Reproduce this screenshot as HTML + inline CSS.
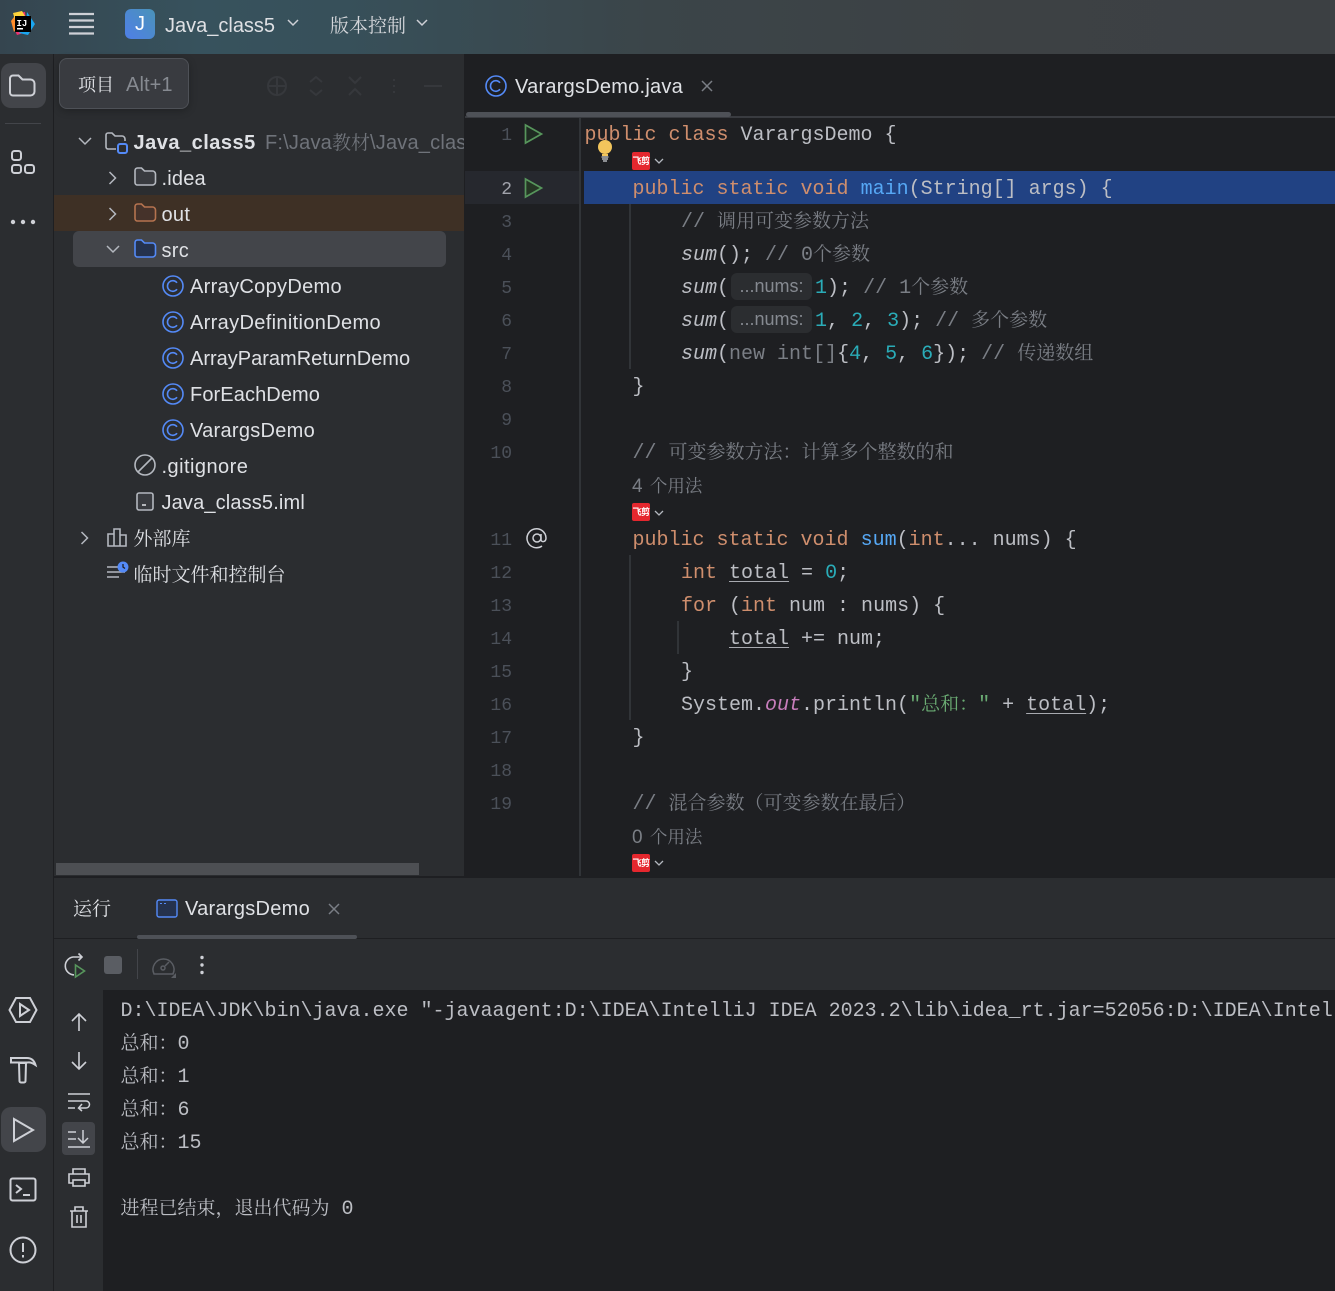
<!DOCTYPE html>
<html lang="zh"><head><meta charset="utf-8"><title>VarargsDemo</title>
<style>
*{box-sizing:border-box}
html,body{margin:0;padding:0;background:#1e1f22}
#r{position:relative;width:1335px;height:1291px;overflow:hidden;background:#1e1f22;font-family:"Liberation Sans","Noto Sans CJK SC",sans-serif}
.a{position:absolute}
.u{position:absolute;white-space:pre;font-size:20px;line-height:36px;height:36px;color:#dfe1e5;letter-spacing:.3px;margin-top:1px}
.s{font-family:"Liberation Serif","Noto Serif CJK SC",serif;letter-spacing:0;font-size:19px;line-height:0}
.c{position:absolute;white-space:pre;font-family:"Liberation Mono",monospace;font-size:20px;line-height:33px;height:33px;color:#bcbec4;margin-top:1px}
.n{position:absolute;width:24px;text-align:right;left:488px;font-family:"Liberation Mono",monospace;font-size:18px;line-height:33px;height:33px;color:#4b5059;margin-top:2px}
.k{color:#cf8e6d}.m{color:#56a8f5}.d{color:#2aacb8}.g{color:#7a7e85}.e{font-style:italic}.f{font-style:italic;color:#c77dbb}.q{color:#6aab73}
.z{font-family:"Noto Serif CJK SC",serif;font-size:19px;font-style:normal;line-height:0}
u{text-decoration-color:#a8aab0;text-decoration-thickness:1px;text-underline-offset:3px}
.h{display:inline-block;vertical-align:top;margin:1px 3px 0 2px;width:81px;height:27px;line-height:27px;background:#2b2d30;border-radius:6px;font-family:"Liberation Sans",sans-serif;font-size:18px;color:#868a91;text-align:center}
.v{position:absolute;width:2px;background:#313438}
.fj{position:absolute;width:18px;height:18px;border-radius:2px;background:#e5272e;color:#fff;font:700 9px/18px "Noto Sans CJK SC",sans-serif;text-align:center;letter-spacing:-.5px;overflow:hidden;white-space:nowrap}
svg{position:absolute;overflow:visible;fill:none}
</style></head><body><div id="r">

<!-- title bar -->
<div class="a" style="left:0;top:0;width:1335px;height:54px;background:linear-gradient(90deg,#35454f 0,#37525d 200px,#37505a 340px,#3b4549 650px,#3d4144 1000px,#3c4043 1335px)"></div>
<svg style="left:0;top:0" width="110" height="54">
<polygon points="15,13 25,12 27,32 17,35 13,26" fill="#f0326e"/><polygon points="11,21 17,13 22,22 14,32" fill="#ff8c2a"/><polygon points="13,13 22,11 25,16 15,20" fill="#ffd43a"/><polygon points="27,12 35,24 28,35 19,33 26,24" fill="#1aa6f0"/>
<rect x="15" y="16" width="16" height="16" fill="#000"/>
<text x="16.5" y="26" font-family="Liberation Mono" font-weight="700" font-size="9" fill="#fff">IJ</text>
<rect x="17" y="28" width="6" height="1.500" fill="#fff"/>
<g stroke="#ced0d6" stroke-width="2.200"><path d="M69 14h25M69 20.500h25M69 27h25M69 33.500h25"/></g>
</svg>
<div class="a" style="left:125px;top:9px;width:30px;height:30px;border-radius:6px;background:linear-gradient(45deg,#4f7fe8,#4a93b8);color:#fff;font-size:20px;line-height:30px;text-align:center">J</div>
<div class="u" style="left:165px;top:7px;letter-spacing:0">Java_class5</div>
<svg style="left:287px;top:19px" width="12" height="8"><path d="M1 1l5 5 5-5" stroke="#ced0d6" stroke-width="1.500"/></svg>
<div class="u" style="left:330px;top:7px;color:#d5d7db"><span class="s">版本控制</span></div>
<svg style="left:416px;top:19px" width="12" height="8"><path d="M1 1l5 5 5-5" stroke="#ced0d6" stroke-width="1.500"/></svg>

<!-- left strip -->
<div class="a" style="left:0;top:54px;width:53px;height:1237px;background:#2b2d30"></div>
<div class="a" style="left:53px;top:54px;width:1px;height:1237px;background:#1e1f22"></div>
<div class="a" style="left:1px;top:63px;width:45px;height:45px;border-radius:10px;background:#43454a"></div>
<svg style="left:9px;top:74px" width="28" height="24"><path d="M1 4.500a3 3 0 0 1 3-3h5.500l4 4h8a4 4 0 0 1 4 4v8a4 4 0 0 1-4 4H4a3 3 0 0 1-3-3z" stroke="#ced0d6" stroke-width="2"/></svg>
<div class="a" style="left:5px;top:123px;width:36px;height:1px;background:#43454a"></div>
<svg style="left:10px;top:149px" width="26" height="26" stroke="#ced0d6" stroke-width="2"><rect x="2" y="2" width="9" height="9" rx="2.500"/><rect x="2" y="16" width="9" height="8" rx="2.500"/><rect x="15" y="16" width="9" height="8" rx="2.500"/></svg>
<svg style="left:10px;top:217px" width="26" height="10"><circle cx="3" cy="5" r="2.200" fill="#ced0d6"/><circle cx="13" cy="5" r="2.200" fill="#ced0d6"/><circle cx="23" cy="5" r="2.200" fill="#ced0d6"/></svg>

<svg style="left:8px;top:995px" width="30" height="30" stroke="#ced0d6" stroke-width="2"><path d="M8 3h14l6.500 12L22 27H8L1.500 15z"/><path d="M12 9l9 6-9 6z"/></svg>
<svg style="left:9px;top:1055px" width="28" height="30" stroke="#ced0d6" stroke-width="2"><path d="M2 3h16c4 0 7 2 8.500 7-3-2-5-3-8-2.500H2zM10 8h7l-.5 18a1.500 1.500 0 0 1-1.500 1.500h-3a1.500 1.500 0 0 1-1.500-1.500z"/></svg>
<div class="a" style="left:1px;top:1107px;width:45px;height:45px;border-radius:10px;background:#43454a"></div>
<svg style="left:12px;top:1117px" width="24" height="26"><path d="M2 2l19 11L2 24z" stroke="#ced0d6" stroke-width="2"/></svg>
<svg style="left:9px;top:1177px" width="28" height="26" stroke="#ced0d6" stroke-width="2"><rect x="1.500" y="1.500" width="25" height="22" rx="2"/><path d="M7 8l5 4-5 4M14 18h7"/></svg>
<svg style="left:9px;top:1236px" width="28" height="28" stroke="#ced0d6" stroke-width="2"><circle cx="14" cy="14" r="12.500"/><path d="M14 7v9M14 19v2.500"/></svg>

<!-- project panel -->
<div class="a" style="left:54px;top:54px;width:410px;height:823px;background:#2b2d30"></div>
<div class="a" style="left:54px;top:195px;width:410px;height:36px;background:#3e3025"></div>
<div class="a" style="left:73px;top:231px;width:373px;height:36px;border-radius:6px;background:#43454a"></div>
<div class="a" style="left:56px;top:863px;width:363px;height:12px;background:#4d4f53"></div>

<svg style="left:268px;top:76px" width="170" height="20" stroke="#36383c" stroke-width="2"><circle cx="9" cy="10" r="9"/><path d="M9 0v20M0 10h18M42 6l6-5 6 5M42 14l6 5 6-5M81 1l6 6 6-6M81 19l6-6 6 6M126 3v2M126 9v2M126 15v2M156 10h18"/></svg>

<div class="a" style="left:59px;top:58px;width:130px;height:51px;background:#393b40;border:1px solid #4e5157;border-radius:8px;box-shadow:0 2px 8px rgba(0,0,0,.25)"></div>
<div class="u" style="left:78px;top:66px;color:#dfe1e5"><span class="s" style="font-size:18px">项目</span></div>
<div class="u" style="left:126px;top:66px;color:#868a91;letter-spacing:.1px">Alt+1</div>

<svg style="left:78px;top:137px" width="14" height="9"><path d="M1 1l6 6 6-6" stroke="#b4b8bf" stroke-width="1.500"/></svg>
<svg style="left:105px;top:131px" width="24" height="24"><path d="M1 16V4a2 2 0 0 1 2-2h4l3 3h7a3 3 0 0 1 3 3v2M11 18H3a2 2 0 0 1-2-2" stroke="#b4b8bf" stroke-width="1.600"/><rect x="13" y="13" width="9" height="9" rx="2" stroke="#548af7" stroke-width="2"/></svg>
<div class="u" style="left:133.500px;top:124px;font-weight:700;letter-spacing:.5px">Java_class5</div>
<div class="a" style="left:265px;top:124px;width:199px;height:38px;overflow:hidden"><div class="u" style="left:0;top:0;color:#6f737a;letter-spacing:.2px">F:\Java<span class="s">教材</span>\Java_class5</div></div>

<svg style="left:108px;top:171px" width="9" height="14"><path d="M1.500 1l6 6-6 6" stroke="#b4b8bf" stroke-width="1.500"/></svg>
<svg style="left:134px;top:167px" width="23" height="20"><path d="M1 3.500a2.500 2.500 0 0 1 2.500-2.500h4l3 3h8a3 3 0 0 1 3 3v8a3 3 0 0 1-3 3h-15a2.500 2.500 0 0 1-2.500-2.500z" stroke="#b4b8bf" stroke-width="1.600" fill="#393b40"/></svg>
<div class="u" style="left:161.500px;top:160px;letter-spacing:.2px">.idea</div>

<svg style="left:108px;top:207px" width="9" height="14"><path d="M1.500 1l6 6-6 6" stroke="#b4b8bf" stroke-width="1.500"/></svg>
<svg style="left:134px;top:203px" width="23" height="20"><path d="M1 3.500a2.500 2.500 0 0 1 2.500-2.500h4l3 3h8a3 3 0 0 1 3 3v8a3 3 0 0 1-3 3h-15a2.500 2.500 0 0 1-2.500-2.500z" stroke="#b5734f" stroke-width="1.600" fill="#45322a"/></svg>
<div class="u" style="left:161.500px;top:196px">out</div>

<svg style="left:106px;top:245px" width="14" height="9"><path d="M1 1l6 6 6-6" stroke="#b4b8bf" stroke-width="1.500"/></svg>
<svg style="left:134px;top:239px" width="23" height="20"><path d="M1 3.500a2.500 2.500 0 0 1 2.500-2.500h4l3 3h8a3 3 0 0 1 3 3v8a3 3 0 0 1-3 3h-15a2.500 2.500 0 0 1-2.500-2.500z" stroke="#548af7" stroke-width="1.600" fill="#25324d"/></svg>
<div class="u" style="left:161.500px;top:232px">src</div>

<svg style="left:162px;top:275px" width="22" height="22" stroke="#548af7" stroke-width="1.600"><circle cx="11" cy="11" r="10"/><path d="M15 7.800a5.300 5.300 0 1 0 0 6.400"/></svg>
<div class="u" style="left:190px;top:268px;letter-spacing:.32px">ArrayCopyDemo</div>
<svg style="left:162px;top:311px" width="22" height="22" stroke="#548af7" stroke-width="1.600"><circle cx="11" cy="11" r="10"/><path d="M15 7.800a5.300 5.300 0 1 0 0 6.400"/></svg>
<div class="u" style="left:190px;top:304px;letter-spacing:.34px">ArrayDefinitionDemo</div>
<svg style="left:162px;top:347px" width="22" height="22" stroke="#548af7" stroke-width="1.600"><circle cx="11" cy="11" r="10"/><path d="M15 7.800a5.300 5.300 0 1 0 0 6.400"/></svg>
<div class="u" style="left:190px;top:340px;letter-spacing:0">ArrayParamReturnDemo</div>
<svg style="left:162px;top:383px" width="22" height="22" stroke="#548af7" stroke-width="1.600"><circle cx="11" cy="11" r="10"/><path d="M15 7.800a5.300 5.300 0 1 0 0 6.400"/></svg>
<div class="u" style="left:190px;top:376px;letter-spacing:.1px">ForEachDemo</div>
<svg style="left:162px;top:419px" width="22" height="22" stroke="#548af7" stroke-width="1.600"><circle cx="11" cy="11" r="10"/><path d="M15 7.800a5.300 5.300 0 1 0 0 6.400"/></svg>
<div class="u" style="left:190px;top:412px;letter-spacing:.28px">VarargsDemo</div>

<svg style="left:134px;top:454px" width="22" height="22" stroke="#b4b8bf" stroke-width="1.600"><circle cx="11" cy="11" r="10"/><path d="M4 18L18 4"/></svg>
<div class="u" style="left:161.500px;top:448px;letter-spacing:.45px">.gitignore</div>
<svg style="left:136px;top:492px" width="18" height="20"><rect x="1" y="1" width="16" height="17" rx="2" stroke="#b4b8bf" stroke-width="1.600" fill="#393b40"/><path d="M6 13h4" stroke="#dfe1e5" stroke-width="1.500"/></svg>
<div class="u" style="left:161.500px;top:484px;letter-spacing:.15px">Java_class5.iml</div>

<svg style="left:80px;top:531px" width="9" height="14"><path d="M1.500 1l6 6-6 6" stroke="#b4b8bf" stroke-width="1.500"/></svg>
<svg style="left:107px;top:528px" width="21" height="19" stroke="#b4b8bf" stroke-width="1.600"><path d="M1 6h6v12H1zM7 1h6v17H7zM13 7h6v11h-6z"/></svg>
<div class="u" style="left:133.500px;top:520px"><span class="s">外部库</span></div>
<svg style="left:107px;top:561px" width="22" height="22"><path d="M0 6h12M0 11h18M0 16h12" stroke="#b4b8bf" stroke-width="1.500"/><circle cx="16" cy="6" r="5.500" fill="#548af7"/><path d="M16 3v3l2 1.500" stroke="#1e1f22" stroke-width="1.300"/></svg>
<div class="u" style="left:133.500px;top:556px"><span class="s">临时文件和控制台</span></div>

<!-- editor -->
<div class="a" style="left:464px;top:54px;width:1px;height:823px;background:#1e1f22"></div>
<svg style="left:485px;top:75px" width="22" height="22" stroke="#548af7" stroke-width="1.600"><circle cx="11" cy="11" r="10"/><path d="M15 7.800a5.300 5.300 0 1 0 0 6.400"/></svg>
<div class="u" style="left:515px;top:68px;letter-spacing:.24px">VarargsDemo.java</div>
<svg style="left:701px;top:80px" width="12" height="12"><path d="M1 1l10 10M11 1L1 11" stroke="#7a7e85" stroke-width="1.500"/></svg>
<div class="a" style="left:465px;top:116px;width:870px;height:2px;background:#393b40"></div>
<div class="a" style="left:466px;top:112px;width:265px;height:5px;border-radius:3px;background:#4e5157"></div>

<div class="a" style="left:465px;top:171px;width:115px;height:33px;background:#26282e"></div>
<div class="a" style="left:584px;top:171px;width:751px;height:33px;background:#214283"></div>
<div class="a" style="left:579px;top:118px;width:2px;height:759px;background:#313438"></div>
<div class="v" style="left:629px;top:204px;height:165px"></div>
<div class="v" style="left:629px;top:555px;height:165px"></div>
<div class="v" style="left:677px;top:621px;height:33px"></div>

<div class="n" style="top:118px">1</div>
<div class="n" style="top:172px;color:#a1a3ab">2</div>
<div class="n" style="top:205px">3</div>
<div class="n" style="top:238px">4</div>
<div class="n" style="top:271px">5</div>
<div class="n" style="top:304px">6</div>
<div class="n" style="top:337px">7</div>
<div class="n" style="top:370px">8</div>
<div class="n" style="top:403px">9</div>
<div class="n" style="top:436px">10</div>
<div class="n" style="top:523px">11</div>
<div class="n" style="top:556px">12</div>
<div class="n" style="top:589px">13</div>
<div class="n" style="top:622px">14</div>
<div class="n" style="top:655px">15</div>
<div class="n" style="top:688px">16</div>
<div class="n" style="top:721px">17</div>
<div class="n" style="top:754px">18</div>
<div class="n" style="top:787px">19</div>

<svg style="left:524px;top:123px" width="20" height="22"><path d="M1.500 2l16 9-16 9z" stroke="#57965c" stroke-width="1.700" fill="#1f2a22"/></svg>
<svg style="left:524px;top:177px" width="20" height="22"><path d="M1.500 2l16 9-16 9z" stroke="#57965c" stroke-width="1.700" fill="#253524"/></svg>
<svg style="left:526px;top:527px" width="22" height="22"><circle cx="11" cy="11" r="4" stroke="#ced0d6" stroke-width="1.500"/><path d="M15 7v5.500c0 3 5 3 5-1.500a9.500 9.500 0 1 0-4 8" stroke="#ced0d6" stroke-width="1.500"/></svg>

<div class="c" style="left:584.500px;top:118px"><span class="k">public class</span> VarargsDemo {</div>
<svg style="left:597px;top:139px" width="16" height="24"><circle cx="8" cy="8" r="7" fill="#f2c55c"/><path d="M5 15h6v2H5z" fill="#f2c55c"/><path d="M4.500 18h7M5 20h6M6 22h4" stroke="#ced0d6" stroke-width="1.300"/></svg>

<div class="fj" style="left:632px;top:152px">飞剪</div>
<svg style="left:654px;top:158px" width="10" height="7"><path d="M1 1l4 4 4-4" stroke="#b4b8bf" stroke-width="1.300"/></svg>

<div class="c" style="left:632.500px;top:172px"><span class="k">public static void</span> <span class="m">main</span>(String[] args) {</div>
<div class="c" style="left:681px;top:205px;color:#7a7e85">// <span class="z">调用可变参数方法</span></div>
<div class="c" style="left:681px;top:238px"><span class="e">sum</span>(); <span class="g">// 0<span class="z">个参数</span></span></div>
<div class="c" style="left:681px;top:271px"><span class="e">sum</span>(<span class="h">...nums:</span><span class="d">1</span>); <span class="g">// 1<span class="z">个参数</span></span></div>
<div class="c" style="left:681px;top:304px"><span class="e">sum</span>(<span class="h">...nums:</span><span class="d">1</span>, <span class="d">2</span>, <span class="d">3</span>); <span class="g">// <span class="z">多个参数</span></span></div>
<div class="c" style="left:681px;top:337px"><span class="e">sum</span>(<span class="g">new int[]</span>{<span class="d">4</span>, <span class="d">5</span>, <span class="d">6</span>}); <span class="g">// <span class="z">传递数组</span></span></div>
<div class="c" style="left:632.500px;top:370px">}</div>
<div class="c" style="left:632.500px;top:436px;color:#7a7e85">// <span class="z">可变参数方法：计算多个整数的和</span></div>
<div class="c" style="left:632px;top:469px;color:#7a7e85;font-family:'Liberation Sans',sans-serif;font-size:19px">4 <span class="z" style="font-size:17.500px;margin-left:2px">个用法</span></div>
<div class="fj" style="left:632px;top:503px">飞剪</div>
<svg style="left:654px;top:510px" width="10" height="7"><path d="M1 1l4 4 4-4" stroke="#b4b8bf" stroke-width="1.300"/></svg>

<div class="c" style="left:632.500px;top:523px"><span class="k">public static void</span> <span class="m">sum</span>(<span class="k">int</span>... nums) {</div>
<div class="c" style="left:681px;top:556px"><span class="k">int</span> <u>total</u> = <span class="d">0</span>;</div>
<div class="c" style="left:681px;top:589px"><span class="k">for</span> (<span class="k">int</span> num : nums) {</div>
<div class="c" style="left:729px;top:622px"><u>total</u> += num;</div>
<div class="c" style="left:681px;top:655px">}</div>
<div class="c" style="left:681px;top:688px">System.<span class="f">out</span>.println(<span class="q">"<span class="z">总和：</span>"</span> + <u>total</u>);</div>
<div class="c" style="left:632.500px;top:721px">}</div>
<div class="c" style="left:632.500px;top:787px;color:#7a7e85">// <span class="z">混合参数（可变参数在最后）</span></div>
<div class="c" style="left:632px;top:820px;color:#7a7e85;font-family:'Liberation Sans',sans-serif;font-size:19px">0 <span class="z" style="font-size:17.500px;margin-left:2px">个用法</span></div>
<div class="fj" style="left:632px;top:854px">飞剪</div>
<svg style="left:654px;top:860px" width="10" height="7"><path d="M1 1l4 4 4-4" stroke="#b4b8bf" stroke-width="1.300"/></svg>

<!-- bottom panel -->
<div class="a" style="left:54px;top:876px;width:1281px;height:2px;background:#1e1f22"></div>
<div class="a" style="left:54px;top:878px;width:1281px;height:112px;background:#2b2d30"></div>
<div class="a" style="left:54px;top:938px;width:1281px;height:1px;background:#1e1f22"></div>
<div class="a" style="left:54px;top:990px;width:49px;height:301px;background:#2b2d30"></div>

<div class="u" style="left:73px;top:890px"><span class="s">运行</span></div>
<svg style="left:156px;top:899px" width="22" height="19"><rect x="1" y="1" width="20" height="17" rx="2" stroke="#548af7" stroke-width="1.400" fill="#25324d"/><path d="M4 4.500h2M8 4.500h2" stroke="#548af7"/></svg>
<div class="u" style="left:185px;top:890px;letter-spacing:.28px">VarargsDemo</div>
<svg style="left:328px;top:903px" width="12" height="12"><path d="M1 1l10 10M11 1L1 11" stroke="#7a7e85" stroke-width="1.500"/></svg>
<div class="a" style="left:137px;top:935px;width:220px;height:4px;border-radius:2px;background:#4e5157"></div>

<svg style="left:63px;top:953px" width="24" height="26"><path d="M11 21.900A9 9 0 0 1 10 4h9M15.500 .5L19 4l-3.500 3.500" stroke="#ced0d6" stroke-width="1.600"/><path d="M12.500 12l9 6-9 6z" stroke="#57965c" stroke-width="1.600"/></svg>
<div class="a" style="left:104px;top:956px;width:18px;height:18px;border-radius:3px;background:#5a5d63"></div>
<div class="a" style="left:137px;top:949px;width:1px;height:30px;background:#43454a"></div>
<svg style="left:151px;top:956px" width="26" height="22" stroke="#5a5d63" stroke-width="1.500"><path d="M3 18a10.500 10.500 0 1 1 19 0H3z"/><circle cx="12" cy="12" r="2"/><path d="M14 10l4-4"/><path d="M20 22l5-5v5z" fill="#5a5d63" stroke="none"/></svg>
<svg style="left:198px;top:955px" width="8" height="20"><circle cx="4" cy="2.500" r="1.700" fill="#ced0d6"/><circle cx="4" cy="10" r="1.700" fill="#ced0d6"/><circle cx="4" cy="17.500" r="1.700" fill="#ced0d6"/></svg>

<svg style="left:71px;top:1013px" width="16" height="18"><path d="M8 1v17M1 8l7-7 7 7" stroke="#ced0d6" stroke-width="1.600"/></svg>
<svg style="left:71px;top:1052px" width="16" height="18"><path d="M8 0v17M1 10l7 7 7-7" stroke="#ced0d6" stroke-width="1.600"/></svg>
<svg style="left:68px;top:1092px" width="23" height="19" stroke="#ced0d6" stroke-width="1.500"><path d="M0 2h22M0 9h18a3.500 3.500 0 0 1 0 7h-7M0 16h7"/><path d="M14 12l-3.500 4 3.500 3"/></svg>
<div class="a" style="left:62px;top:1122px;width:33px;height:33px;border-radius:4px;background:#43454a"></div>
<svg style="left:68px;top:1130px" width="23" height="19" stroke="#ced0d6" stroke-width="1.500"><path d="M0 2h8M0 9h8M0 17h22M15 0v13M10 8l5 5 5-5"/></svg>
<svg style="left:68px;top:1168px" width="22" height="20" stroke="#ced0d6" stroke-width="1.600"><path d="M5 6V1h12v5M5 15H1V6h20v9h-4"/><rect x="5" y="12" width="12" height="6"/></svg>
<svg style="left:70px;top:1206px" width="18" height="22" stroke="#ced0d6" stroke-width="1.600"><path d="M0 5h18M5 5V1h8v4M2 5v16h14V5M7 9v8M11 9v8"/></svg>

<div class="c" style="left:120.500px;top:994px">D:\IDEA\JDK\bin\java.exe "-javaagent:D:\IDEA\IntelliJ IDEA 2023.2\lib\idea_rt.jar=52056:D:\IDEA\IntelliJ IDEA 2023.2\bin</div>
<div class="c" style="left:120.500px;top:1027px"><span class="z">总和：</span>0</div>
<div class="c" style="left:120.500px;top:1060px"><span class="z">总和：</span>1</div>
<div class="c" style="left:120.500px;top:1093px"><span class="z">总和：</span>6</div>
<div class="c" style="left:120.500px;top:1126px"><span class="z">总和：</span>15</div>
<div class="c" style="left:120.500px;top:1192px"><span class="z">进程已结束，退出代码为</span> 0</div>

</div></body></html>
